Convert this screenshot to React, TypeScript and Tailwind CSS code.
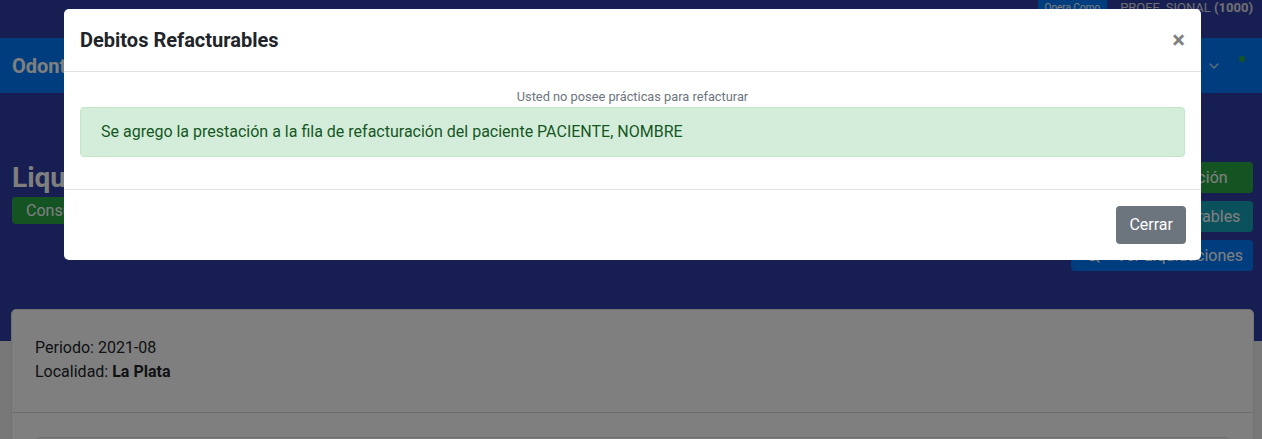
import { Search, ChevronDown } from "lucide-react";

const TopStrip = () => (
  <div className="h-[38px] bg-[#2c3ca4] flex justify-end items-start pr-[9px] gap-[13px]">
    <span className="bg-[#007bff] text-white text-[10px] leading-[14px] px-[7px] pt-[1px] h-[14px]">
      Opera Como
    </span>
    <span className="text-[#e0e0e8] text-[13px] leading-[15px]">
      PROFE_SIONAL <b>(1000)</b>
    </span>
  </div>
);

const Navbar = () => (
  <div className="h-[55px] bg-[#007bff] flex items-center justify-between pl-3 pr-[17px]">
    <span className="text-white text-[20px] font-bold">Odontólogos</span>
    <div className="flex items-center gap-[17px]">
      <span className="flex items-center gap-[8px] text-white/80 text-[16px]">
        Mis Datos <ChevronDown size={16} />
      </span>
      <span className="w-[6px] h-[6px] rounded-full bg-[#28a745] mb-[14px]" />
    </div>
  </div>
);

const Header = () => (
  <div className="bg-[#2c3ca4] pt-[69px] pb-[70px] pl-3 pr-[9px] flex justify-between items-start">
    <div className="flex flex-col items-start">
      <h1 className="text-white text-[28px] leading-[32px] font-bold">Liquidaciones</h1>
      <span className="mt-[3px] bg-[#28a745] text-white text-[16px] leading-[27px] px-[14px] rounded-[4px]">
        Consultorio
      </span>
    </div>
    <div className="flex flex-col items-end gap-[8px]">
      <button className="h-[31px] w-[182px] bg-[#28a745] text-white text-[16px] rounded-[4px] text-center">
        Nueva Liquidación
      </button>
      <button className="h-[31px] w-[182px] bg-[#17a2b8] text-white text-[16px] rounded-[4px] text-center">
        Debitos Refacturables
      </button>
      <button className="h-[31px] w-[182px] pl-[14px] pr-[10px] bg-[#007bff] text-white text-[16px] rounded-[4px] flex items-center justify-between">
        <Search size={16} />
        <span>Ver Liquidaciones</span>
      </button>
    </div>
  </div>
);

const Card = () => (
  <div className="relative -mt-[32px] ml-[11px] mr-[8px] bg-white rounded-[5px] border border-[#e5e5e5]">
    <div className="pt-[26px] pb-[28px] px-[23px] text-[16px] leading-[24px] text-[#212529]">
      <div>Periodo: 2021-08</div>
      <div>
        Localidad: <b>La Plata</b>
      </div>
    </div>
    <div className="border-t border-[#dcdcdc] px-6 pt-6 pb-6">
      <div className="h-[60px] border border-[#dcdcdc] rounded-[4px]" />
    </div>
  </div>
);

const Modal = () => (
  <div className="fixed inset-0 bg-black/50">
    <div className="ml-[64px] mt-[9px] w-[1137px] bg-white rounded-[5px]">
      <div className="flex items-center justify-between px-4 py-4 border-b border-[#dee2e6]">
        <h5 className="text-[20px] leading-[30px] font-bold text-[#212529]">
          Debitos Refacturables
        </h5>
        <button className="text-[24px] leading-none font-bold text-black/50">×</button>
      </div>
      <div className="px-4 pt-4 pb-4">
        <div className="text-center text-[12.8px] leading-[18px] text-[#6c757d] mb-[1px]">
          Usted no posee prácticas para refacturar
        </div>
        <div className="bg-[#d4edda] border border-[#c3e6cb] text-[#155724] rounded-[4px] px-5 py-3 text-[16px] leading-[24px] mb-4">
          Se agrego la prestación a la fila de refacturación del paciente PACIENTE, NOMBRE
        </div>
      </div>
      <div className="flex justify-end border-t border-[#dee2e6] p-3">
        <button className="my-1 ml-1 mr-[3px] h-[38px] px-[13px] bg-[#6c757d] text-white text-[16px] rounded-[4px]">
          Cerrar
        </button>
      </div>
    </div>
  </div>
);

export default function App() {
  return (
    <div className="min-h-[439px] bg-[#f0f0f0] font-['Roboto',sans-serif]">
      <TopStrip />
      <Navbar />
      <Header />
      <Card />
      <Modal />
    </div>
  );
}
